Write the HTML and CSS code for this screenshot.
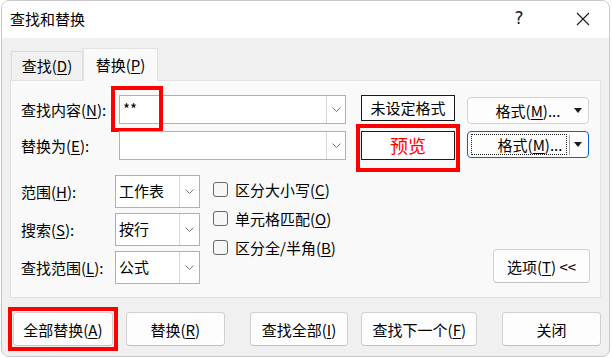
FILE: index.html
```html
<!DOCTYPE html>
<html lang="zh-CN">
<head>
<meta charset="utf-8">
<link rel="stylesheet" href="styles.css">
</head>
<body>
<div class="window">
  <div class="titlebar">
    <span class="title">查找和替换</span>
    <div class="tb-btns">
      <span class="help">?</span>
      <svg class="close" width="14" height="14" viewBox="0 0 14 14"><path d="M1 1L13 13M13 1L1 13" stroke="#1a1a1a" stroke-width="1.1" fill="none"/></svg>
    </div>
  </div>
  <div class="content">
    <div class="tabs">
      <div class="tab">查找(<u>D</u>)</div>
      <div class="tab active">替换(<u>P</u>)</div>
    </div>
    <div class="panel">
      <div class="row row1">
        <label class="lbl">查找内容(<u>N</u>):</label>
        <div class="combo">
          <span class="combo-text">**</span>
          <span class="combo-arrow"><svg width="9" height="5" viewBox="0 0 9 5"><path d="M0.5 0.5L4.5 4.5L8.5 0.5" stroke="#777" fill="none"/></svg></span>
          <span class="mark mark-find"></span>
        </div>
        <div class="fmtbox">未设定格式</div>
        <div class="fmtbtn"><span class="fmt-label">格式(<u>M</u>)...</span><span class="tri"></span></div>
      </div>
      <div class="row row2">
        <label class="lbl">替换为(<u>E</u>):</label>
        <div class="combo">
          <span class="combo-text"></span>
          <span class="combo-arrow"><svg width="9" height="5" viewBox="0 0 9 5"><path d="M0.5 0.5L4.5 4.5L8.5 0.5" stroke="#777" fill="none"/></svg></span>
        </div>
        <div class="fmtbox preview">预览<span class="mark mark-preview"></span></div>
        <div class="fmtbtn focused"><span class="focus-rect"><span class="fmt-label">格式(<u>M</u>)...</span></span><span class="divider"></span><span class="tri"></span></div>
      </div>
      <div class="options">
        <div class="selects">
          <label class="lbl2">范围(<u>H</u>):</label>
          <div class="select"><span class="sel-text">工作表</span><span class="sel-arrow"><svg width="9" height="5" viewBox="0 0 9 5"><path d="M0.5 0.5L4.5 4.5L8.5 0.5" stroke="#777" fill="none"/></svg></span></div>
          <label class="lbl2">搜索(<u>S</u>):</label>
          <div class="select"><span class="sel-text">按行</span><span class="sel-arrow"><svg width="9" height="5" viewBox="0 0 9 5"><path d="M0.5 0.5L4.5 4.5L8.5 0.5" stroke="#777" fill="none"/></svg></span></div>
          <label class="lbl2">查找范围(<u>L</u>):</label>
          <div class="select"><span class="sel-text">公式</span><span class="sel-arrow"><svg width="9" height="5" viewBox="0 0 9 5"><path d="M0.5 0.5L4.5 4.5L8.5 0.5" stroke="#777" fill="none"/></svg></span></div>
        </div>
        <div class="checks">
          <div class="check"><span class="box"></span>区分大小写(<u>C</u>)</div>
          <div class="check"><span class="box"></span>单元格匹配(<u>O</u>)</div>
          <div class="check"><span class="box"></span>区分全/半角(<u>B</u>)</div>
        </div>
        <div class="btn opt-btn">选项(<u>T</u>) &lt;&lt;</div>
      </div>
    </div>
    <div class="buttons">
      <div class="btn b-all">全部替换(<u>A</u>)<span class="mark mark-all"></span></div>
      <div class="btn b-rep">替换(<u>R</u>)</div>
      <div class="btn b-findall">查找全部(<u>I</u>)</div>
      <div class="btn b-next">查找下一个(<u>F</u>)</div>
      <div class="btn b-close">关闭</div>
    </div>
  </div>
</div>
</body>
</html>
```

FILE: styles.css
```css
* { box-sizing: border-box; }
html, body { margin: 0; padding: 0; background: #ffffff; }
body {
  font-family: "Noto Sans CJK SC", "Noto Sans", sans-serif;
  font-size: 15px;
  color: #000;
}
u { text-decoration: underline; text-underline-offset: 2px; text-decoration-thickness: 1px; }

.window {
  width: 609px;
  height: 357px;
  margin-left: 1px;
  border: 1px solid #c9c9c9;
  border-radius: 8px;
  overflow: hidden;
  background: #f0f0f0;
  display: flex;
  flex-direction: column;
}

.titlebar {
  height: 37px;
  background: #ffffff;
  display: flex;
  align-items: center;
  justify-content: space-between;
  padding-left: 8px;
  flex: none;
}
.title { font-size: 15px; line-height: 20px; margin-top: -1px; }
.tb-btns { display: flex; align-items: center; height: 100%; }
.help { font-family: "DejaVu Sans", sans-serif; font-size: 17px; width: 14px; text-align: center; margin-right: 50px; margin-top: -3px; color: #1a1a1a; }
.close { margin-right: 19px; margin-top: -2px; }

.content {
  flex: 1;
  padding: 10px 8px 0 8px;
  display: flex;
  flex-direction: column;
}

.tabs {
  display: flex;
  align-items: flex-end;
  height: 32px;
  flex: none;
}
.tab {
  height: 29px;
  width: 72px;
  margin-left: 1px;
  border: 1px solid #dcdcdc;
  border-bottom: none;
  background: #f0f0f0;
  text-align: center;
  line-height: 27px;
  font-size: 15px;
}
.tab.active {
  width: 75px;
  height: 33px;
  margin-left: 0;
  margin-bottom: -1px;
  background: #f9f9f9;
  border-color: #e2e2e2;
  line-height: 32px;
  position: relative;
  z-index: 1;
}

.panel {
  height: 218px;
  border: 1px solid #e2e2e2;
  background: #f9f9f9;
  padding: 14px 10px 0 10px;
  flex: none;
}

.row { display: flex; align-items: flex-start; height: 29px; }
.row2 { margin-top: 7px; }
.lbl { width: 98px; line-height: 29px; font-size: 15px; white-space: nowrap; }

.combo {
  width: 227px;
  height: 29px;
  border: 1px solid #b0b0b0;
  background: #fff;
  display: flex;
  position: relative;
}
.combo-text { flex: 1; padding-left: 3px; line-height: 26px; font-size: 15px; }
.combo-arrow {
  width: 19px;
  border-left: 1px solid #d6d6d6;
  display: flex;
  align-items: center;
  justify-content: center;
  background: #fff;
}

.mark { position: absolute; border: 4px solid #f00; pointer-events: none; }
.mark-find { left: -9px; top: -10px; width: 52px; height: 46px; }
.mark-preview { left: -6px; top: -8px; width: 104px; height: 48px; }
.mark-all { left: -6px; top: -6px; width: 110px; height: 44px; }

.fmtbox {
  width: 94px;
  height: 26px;
  margin-left: 15px;
  border: 1px solid #1a1a1a;
  background: #fff;
  text-align: center;
  line-height: 24px;
  font-size: 15px;
  position: relative;
}
.fmtbox.preview { height: 29px; line-height: 27px; color: #ff0000; font-size: 18px; }

.fmtbtn {
  width: 122px;
  height: 27px;
  margin-left: 12px;
  margin-top: 2px;
  border: 1px solid #d3d3d3;
  border-radius: 4px;
  background: #fdfdfd;
  display: flex;
  align-items: center;
  position: relative;
}
.row2 .fmtbtn { margin-top: 0; }
.fmt-label { flex: 1; text-align: center; padding-left: 18px; font-size: 15px; line-height: 20px; }
.tri {
  width: 0; height: 0;
  border-left: 4px solid transparent;
  border-right: 4px solid transparent;
  border-top: 5px solid #1a1a1a;
  margin: 0 6px 0 4px;
}
.fmtbtn.focused { border-color: #0a64c8; }
.focus-rect {
  flex: 1;
  display: flex;
  height: 21px;
  margin-left: 3px;
  border: 1px dotted #1a1a1a;
  align-items: center;
}
.focus-rect .fmt-label { padding-left: 22px; }
.divider { width: 1px; height: 20px; background: #a8a8a8; margin-left: 2px; }
.focused .tri { margin-left: 4px; }

.options { display: flex; margin-top: 15px; height: 109px; }
.selects {
  display: grid;
  grid-template-columns: 94px 85px;
  grid-auto-rows: 33px;
  row-gap: 5px;
}
.lbl2 { line-height: 33px; font-size: 15px; white-space: nowrap; }
.select {
  border: 1px solid #b0b0b0;
  background: #fff;
  display: flex;
}
.sel-text { flex: 1; padding-left: 3px; line-height: 30px; font-size: 15px; }
.sel-arrow {
  width: 20px;
  border-left: 1px solid #d6d6d6;
  display: flex;
  align-items: center;
  justify-content: center;
}

.checks { margin-left: 13px; display: flex; flex-direction: column; }
.check { height: 29px; display: flex; align-items: center; font-size: 15px; white-space: nowrap; }
.box {
  width: 15px;
  height: 15px;
  border: 1px solid #666;
  border-radius: 3px;
  background: #f6f6f6;
  margin-right: 7px;
}

.btn {
  border: 1px solid #d0d0d0;
  border-bottom-color: #c2c2c2;
  border-radius: 4px;
  background: #fdfdfd;
  display: flex;
  align-items: center;
  justify-content: center;
  font-size: 15px;
  position: relative;
}
.opt-btn { margin-left: auto; align-self: flex-end; width: 97px; height: 34px; margin-bottom: 1px; }

.buttons { display: flex; margin-top: 14px; height: 34px; }
.buttons .btn { height: 34px; }
.b-all { width: 100px; margin-left: 3px; }
.b-rep { width: 99px; margin-left: 13px; }
.b-findall { width: 99px; margin-left: 25px; }
.b-next { width: 116px; margin-left: 13px; }
.b-close { width: 99px; margin-left: 25px; }
```
